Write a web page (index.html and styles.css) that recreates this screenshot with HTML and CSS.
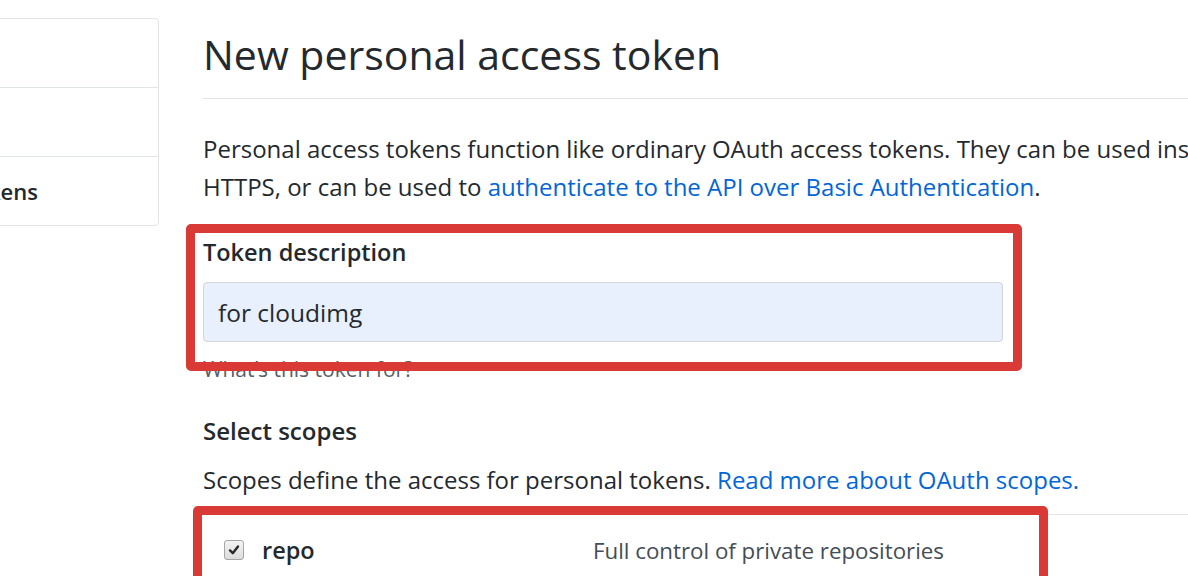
FILE: index.html
```html
<!DOCTYPE html>
<html lang="en">
<head>
<meta charset="utf-8">
<title>New personal access token</title>
<link rel="stylesheet" href="styles.css">
</head>
<body>
<div class="page">
  <nav class="menu">
    <div class="menu-item">OAuth Apps</div>
    <div class="menu-item">GitHub Apps</div>
    <div class="menu-item selected">Personal access tokens</div>
  </nav>
  <main class="main">
    <h2 class="title">New personal access token</h2>
    <p class="lead intro">Personal access tokens function like ordinary OAuth access tokens. They can be used instead of a password for Git over HTTPS, or can be used to <a href="#">authenticate to the API over Basic Authentication</a>.</p>
    <div class="form-group">
      <div class="mark mark-desc"></div>
      <label class="label" for="desc">Token description</label>
      <input id="desc" class="input" type="text" value="for cloudimg">
      <p class="note">What’s this token for?</p>
    </div>
    <h3 class="subhead">Select scopes</h3>
    <p class="lead scopes-lead">Scopes define the access for personal tokens. <a href="#">Read more about OAuth scopes.</a></p>
    <div class="scopes">
      <div class="mark mark-scopes"></div>
      <div class="scope-row">
        <span class="check"><svg viewBox="0 0 20 20" width="20" height="20"><path d="M5 10.5 L8.5 14 L15 5.5" fill="none" stroke="#2b2b2b" stroke-width="3" stroke-linecap="round" stroke-linejoin="round"/></svg></span>
        <span class="scope-name">repo</span>
        <span class="scope-desc">Full control of private repositories</span>
      </div>
    </div>
  </main>
</div>
</body>
</html>
```

FILE: styles.css
```css
html, body {
  margin: 0;
  padding: 0;
  background: #fff;
}
body {
  width: 1188px;
  height: 576px;
  overflow: hidden;
  font-family: "Open Sans", "Noto Sans", sans-serif;
  color: #24292e;
}
.page {
  display: flex;
  align-items: flex-start;
}
.menu {
  margin-top: 18px;
  margin-left: -228px;
  width: 385px;
  border: 1px solid #e1e4e8;
  border-radius: 4px;
  flex-shrink: 0;
  display: flex;
  flex-direction: column;
}
.menu-item {
  height: 68px;
  display: flex;
  align-items: center;
  padding-left: 20px;
  font-size: 22px;
  color: #24292e;
  border-top: 1px solid #e1e4e8;
  white-space: nowrap;
}
.menu-item:first-child { border-top: 0; }
.menu-item.selected { font-weight: 600; }
.main {
  margin-left: 44px;
  flex: 1;
  min-width: 0;
}
.title {
  margin: 28px 0 0;
  padding-bottom: 18px;
  font-size: 41px;
  font-weight: 400;
  line-height: 52px;
  border-bottom: 1px solid #e1e4e8;
  white-space: nowrap;
}
.lead {
  margin: 31px 0 0;
  font-size: 24px;
  line-height: 38px;
}
.intro { width: 1395px; }
a { color: #0366d6; text-decoration: none; }
.form-group {
  position: relative;
  margin-top: 29px;
  width: 800px;
}
.label {
  display: block;
  font-size: 23.5px;
  font-weight: 600;
  line-height: 34px;
}
.input {
  display: block;
  box-sizing: border-box;
  margin-top: 13px;
  width: 800px;
  height: 60px;
  padding: 0 14px;
  font-family: inherit;
  font-size: 24.5px;
  color: #24292e;
  background: #e8f0fe;
  border: 1px solid #d1d5da;
  border-radius: 4px;
  outline: none;
}
.note {
  margin: 12px 0 0;
  font-size: 21px;
  line-height: 30px;
  color: #586069;
}
.mark {
  position: absolute;
  border: 9px solid #d93a35;
  border-radius: 5px;
  box-sizing: border-box;
  pointer-events: none;
  z-index: 2;
}
.mark-desc {
  left: -17px;
  top: -11px;
  width: 836px;
  height: 147px;
}
.subhead {
  margin: 30px 0 0;
  font-size: 24px;
  font-weight: 600;
  line-height: 34px;
}
.scopes-lead { margin-top: 13px; }
.scopes {
  position: relative;
  margin-top: 15px;
  border-top: 1px solid #e1e4e8;
}
.mark-scopes {
  left: -10px;
  top: -9px;
  width: 855px;
  height: 120px;
}
.scope-row {
  display: flex;
  align-items: center;
  height: 70px;
  padding-left: 21px;
}
.check {
  width: 20px;
  height: 20px;
  box-sizing: border-box;
  border: 1px solid #a6a6a6;
  border-radius: 3px;
  background: linear-gradient(#f4f4f4, #dcdcdc);
  display: flex;
  align-items: center;
  justify-content: center;
  flex-shrink: 0;
}
.check svg { width: 16px; height: 16px; }
.scope-name {
  margin-left: 18px;
  width: 331px;
  font-size: 23.5px;
  font-weight: 600;
}
.scope-desc {
  font-size: 22.3px;
  color: #444d56;
}
```
